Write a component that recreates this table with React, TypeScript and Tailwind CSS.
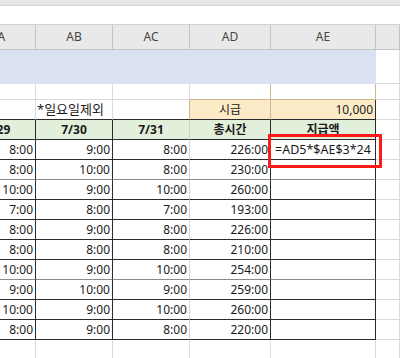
const dark = "border-[#2b2b2b]";
const grid = "border-[#dadada]";
const tan = "border-[#cdb98f]";

const rows: string[][] = [
  ["8:00", "9:00", "8:00", "226:00"],
  ["8:00", "10:00", "8:00", "230:00"],
  ["10:00", "9:00", "10:00", "260:00"],
  ["7:00", "8:00", "7:00", "193:00"],
  ["8:00", "9:00", "8:00", "226:00"],
  ["8:00", "8:00", "8:00", "210:00"],
  ["10:00", "9:00", "10:00", "254:00"],
  ["9:00", "10:00", "9:00", "259:00"],
  ["10:00", "9:00", "10:00", "260:00"],
  ["8:00", "9:00", "8:00", "220:00"],
];

const cols = "grid grid-cols-[76px_77px_77px_81px_105px_24px]";

export default function App() {
  return (
    <div
      className="relative h-[358px] w-[400px] overflow-hidden bg-white text-[12px] text-[#1a1a1a]"
      style={{ fontFamily: '"Noto Sans", "Noto Sans CJK KR", sans-serif' }}
    >
      <div className="h-[6px] border-b border-[#d2d2d2] bg-[#e6e6e6]" />
      <div className="h-[19px] border-b border-[#d2d2d2] bg-white" />

      <div className="-ml-[40px] w-[440px]">
        {/* column headers */}
        <div className={`${cols} h-[25px] border-b border-[#c4c4c4] bg-[#e9e9e9] text-[#444]`}>
          {["AA", "AB", "AC", "AD", "AE", ""].map((c, i) => (
            <div key={i} className="flex items-center justify-center border-r border-[#c4c4c4] leading-none">
              {c}
            </div>
          ))}
        </div>

        {/* row 1: merged blue band */}
        <div className={cols}>
          <div className="col-span-5 h-[34px] bg-[#d9e1f2]" />
          <div className={`h-[34px] border-b border-r ${grid}`} />
        </div>

        {/* row 2 */}
        <div className={`${cols} h-[16px]`}>
          <div className={`border-b border-r ${grid}`} />
          <div className={`border-b border-r ${grid}`} />
          <div className={`border-b border-r ${grid}`} />
          <div className={`border-b border-r ${tan}`} />
          <div className={`border-b border-r ${tan}`} />
          <div className={`border-b border-r ${grid}`} />
        </div>

        {/* row 3 */}
        <div className={`${cols} h-[20px] leading-[19px]`}>
          <div className={`border-b border-r ${dark} border-r-[#dadada]`} />
          <div className={`border-b border-r ${dark} border-r-[#dadada] whitespace-nowrap pl-[1px] text-[13px]`}>*일요일제외</div>
          <div className={`border-b border-r ${dark} border-r-[#cdb98f]`} />
          <div className={`border-b border-r ${dark} border-r-[#cdb98f] bg-[#fdebc8] text-center`}>시급</div>
          <div className={`border-b border-r ${dark} bg-[#fdebc8] pr-[2px] text-right`}>10,000</div>
          <div className={`border-b border-r ${grid}`} />
        </div>

        {/* header row */}
        <div className={`${cols} h-[20px] font-bold leading-[19px]`}>
          <div className={`border-b border-r ${dark} bg-[#e2efda] text-center`}>7/29</div>
          <div className={`border-b border-r ${dark} bg-[#e2efda] text-center`}>7/30</div>
          <div className={`border-b border-r ${dark} border-r-[#c9d6c2] bg-[#e2efda] text-center`}>7/31</div>
          <div className={`border-b border-r ${dark} bg-[#e2efda] text-center`}>총시간</div>
          <div className={`border-b border-r ${dark} bg-[#e2efda] text-center`}>지급액</div>
          <div className={`border-b border-r ${grid}`} />
        </div>

        {/* data */}
        {rows.map((r, i) => {
          const b = i === 1 || i === 6 ? "border-b-[#8a8a8a]" : "";
          return (
            <div key={i} className={`${cols} h-[20px] leading-[19px]`}>
              <div className={`border-b border-r ${dark} ${b} pr-[2px] text-right`}>{r[0]}</div>
              <div className={`border-b border-r ${dark} ${b} pr-[2px] text-right`}>{r[1]}</div>
              <div className={`border-b border-r ${dark} ${b} border-r-[#d6d6d6] pr-[2px] text-right`}>{r[2]}</div>
              <div className={`border-b border-r ${dark} ${b} pr-[2px] text-right`}>{r[3]}</div>
              <div className={`border-b border-r ${dark} ${b} whitespace-nowrap pl-[4px] text-[12.5px]`}>
                {i === 0 ? "=AD5*$AE$3*24" : ""}
              </div>
              <div className={`border-b border-r ${grid}`} />
            </div>
          );
        })}

        {/* empty row below */}
        <div className={`${cols} h-[20px]`}>
          {[0, 1, 2, 3, 4, 5].map((k) => (
            <div key={k} className={`border-r ${grid}`} />
          ))}
        </div>
      </div>

      {/* highlight box */}
      <div className="pointer-events-none absolute left-[268px] top-[134px] h-[34px] w-[114px] border-[3px] border-[#ff1a1a]" />
    </div>
  );
}
